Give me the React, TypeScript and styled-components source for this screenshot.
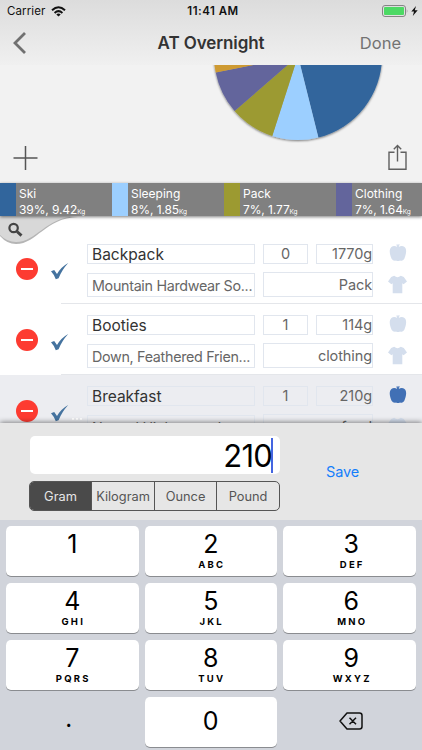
import * as React from "react";
import styled, { createGlobalStyle, css } from "styled-components";

const GlobalStyle = createGlobalStyle`
    * {
        box-sizing: border-box;
    }

    body {
        margin: 0;
        font-family: Inter, "Liberation Sans", sans-serif;
        color: #333333;
    }
`;

const Screen = styled.div`
    display: flex;
    flex-direction: column;
    width: 422px;
    height: 750px;
    overflow: hidden;
    background: #f2f2f2;
`;

const Header = styled.header`
    flex: none;
    height: 65px;
    background: linear-gradient(#dcdcdc, #f0f0f0);
`;

const StatusBar = styled.div`
    display: grid;
    grid-template-columns: 1fr auto 1fr;
    align-items: center;
    height: 21px;
    padding: 1px 4px 0 7px;
    font-size: 11.5px;
    color: #111111;
`;

const Carrier = styled.div`
    display: flex;
    align-items: center;
    gap: 6px;
    letter-spacing: 0.1px;
`;

const Clock = styled.div`
    padding-left: 1px;
    font-weight: 600;
    letter-spacing: 0.5px;
`;

const Power = styled.div`
    display: flex;
    justify-content: flex-end;
    align-items: center;
    gap: 3px;
`;

const NavBar = styled.div`
    display: grid;
    grid-template-columns: 1fr auto 1fr;
    align-items: center;
    height: 44px;
    padding: 0 21px 0 12px;
`;

const Title = styled.h1`
    margin: 0;
    padding-left: 9px;
    font-size: 17px;
    font-weight: 600;
    letter-spacing: -0.1px;
`;

const DoneButton = styled.button`
    justify-self: end;
    padding: 0;
    border: 0;
    background: none;
    font: 400 16.5px Inter, sans-serif;
    color: #737373;
`;

const Overview = styled.section`
    display: flex;
    flex: none;
    height: 118px;
    padding: 0 15px 0 13px;
`;

const ToolIcon = styled.svg`
    align-self: flex-end;
    flex: none;
    margin-bottom: 12px;
`;

const Pie = styled.svg`
    display: block;
    flex: none;
    margin: 0 auto 0 152.7px;
`;

const Legend = styled.div`
    display: flex;
    flex: none;
    position: relative;
    height: 33px;
    overflow: visible;
    box-shadow: 0 1px 3px rgba(0, 0, 0, 0.5);
    z-index: 1;
`;

const LegendItem = styled.div<{ $color: string }>`
    flex: 0 0 112px;
    height: 33px;
    padding: 3px 0 0 3px;
    border-left: 16px solid ${({ $color }) => $color};
    background: #808080;
    color: #ffffff;
    font-size: 12px;
    line-height: 15.5px;
    white-space: nowrap;

    &:last-child {
        flex-basis: 86px;
    }

    small {
        font-size: 6.5px;
    }
`;

const LegendValue = styled.div`
    letter-spacing: -0.1px;
`;

const List = styled.section`
    position: relative;
    flex: none;
    height: 207px;
    padding-top: 17px;
    overflow: hidden;
    background: #ffffff;
`;

const SearchTab = styled.svg`
    position: absolute;
    top: 0;
    left: 0;
`;

const Item = styled.div<{ $selected?: boolean }>`
    display: flex;
    height: 71px;
    background: ${({ $selected }) => ($selected ? "#ecedf1" : "#ffffff")};
`;

const RemoveButton = styled.button`
    display: flex;
    align-items: center;
    justify-content: center;
    flex: none;
    width: 22px;
    height: 22px;
    margin: 25px 0 0 16px;
    padding: 0;
    border: 0;
    border-radius: 50%;
    background: #fd3b31;

    &::before {
        content: "";
        width: 12px;
        height: 1.5px;
        background: #ffffff;
    }
`;

const ItemBody = styled.div<{ $last?: boolean }>`
    display: flex;
    flex: 1;
    margin-left: 23px;
    border-bottom: 1px solid ${({ $last }) => ($last ? "transparent" : "#e4e6ea")};
`;

const CheckColumn = styled.div`
    display: flex;
    flex: none;
    width: 37px;
    margin-left: -11px;
    padding-top: 29px;
`;

const MoreDots = styled.div`
    display: flex;
    gap: 2px;
    margin: 14px 0 0 3px;

    i {
        width: 2px;
        height: 2px;
        background: #ffffff;
    }
`;

const Fields = styled.div`
    display: grid;
    grid-template-columns: 168px 45px 57px;
    grid-template-rows: 20px 25px;
    gap: 8px;
    padding-top: 11px;
`;

const Field = styled.div<{ $align?: string; $strong?: boolean; $wide?: boolean }>`
    padding: 0 ${({ $align }) => ($align === "right" ? 0 : 4)}px;
    border: 1px solid #e1e6ee;
    font-size: 14.5px;
    line-height: 18px;
    letter-spacing: -0.1px;
    text-align: ${({ $align }) => $align || "left"};
    white-space: nowrap;
    color: #666666;

    ${({ $strong }) => $strong && css`
        font-size: 15.5px;
        line-height: 19px;
        letter-spacing: 0;
        color: #333333;
    `}

    ${({ $wide }) => $wide && css`
        grid-column: span 2;
    `}
`;

const Description = styled(Field)`
    margin-top: 0.5px;
    font-size: 14.3px;
    line-height: 23px;
    letter-spacing: -0.3px;
`;

const Category = styled(Field)`
    margin-top: -0.5px;
    line-height: 23px;
`;

const Badges = styled.div`
    display: flex;
    flex-direction: column;
    align-items: center;
    gap: 13px;
    margin: 10px 0 0 15px;
`;

const Editor = styled.section`
    position: relative;
    display: flex;
    flex: none;
    height: 97px;
    padding: 13px 0 0 29px;
    background: #e6e6e6;
    box-shadow: 0 -1px 5px rgba(0, 0, 0, 0.45);
`;

const EditorMain = styled.div`
    width: 251px;
`;

const ValueInput = styled.div`
    display: flex;
    align-items: center;
    justify-content: flex-end;
    height: 38px;
    padding-right: 7px;
    margin: 0 0 7px 1px;
    border-radius: 5px;
    background: #ffffff;
    font-size: 31px;
    letter-spacing: -0.8px;
    color: #000000;
`;

const Caret = styled.span`
    width: 2px;
    height: 35px;
    margin-left: -1px;
    background: #4465e0;
`;

const Units = styled.div`
    display: grid;
    grid-template-columns: 61px 63px 62px 63px;
    height: 30px;
    overflow: hidden;
    border: 1px solid #555555;
    border-radius: 5px;
`;

const Unit = styled.button<{ $active?: boolean }>`
    padding: 0;
    border: 0;
    border-left: 1px solid #555555;
    background: ${({ $active }) => ($active ? "#4a4a4a" : "transparent")};
    color: ${({ $active }) => ($active ? "#e6e6e6" : "#555555")};
    font: 400 12.8px Inter, sans-serif;

    &:first-child {
        border-left: 0;
    }
`;

const SaveButton = styled.button`
    align-self: flex-start;
    margin: 27px 0 0 46px;
    padding: 0;
    border: 0;
    background: none;
    font: 400 14.5px Inter, sans-serif;
    letter-spacing: -0.1px;
    color: #157efb;
`;

const Keypad = styled.div`
    display: grid;
    flex: 1;
    position: relative;
    grid-template-columns: repeat(3, 132.5px);
    grid-auto-rows: 50px;
    gap: 7px 6px;
    padding: 6px 6px 0 6px;
    background: #d1d4db;
`;

const Key = styled.button<{ $plain?: boolean; $centered?: boolean }>`
    display: flex;
    flex-direction: column;
    align-items: center;
    padding: 4px 0 0;
    border: 0;
    border-radius: 5px;
    background: #ffffff;
    box-shadow: 0 1px 0 #8a8c90;
    font: 400 25px/28px Inter, sans-serif;
    color: #000000;

    ${({ $centered }) => $centered && css`
        justify-content: center;
        padding: 0 0 2px;
    `}

    ${({ $plain }) => $plain && css`
        background: none;
        box-shadow: none;
    `}

    &:nth-child(3n) {
        padding-left: 4px;
    }
`;

const Point = styled.span`
    padding: 0 7px 5px 0;
    font-size: 24px;
`;

const Letters = styled.span`
    margin-top: 1px;
    padding-left: 2px;
    font-size: 9.5px;
    font-weight: 700;
    line-height: 11px;
    letter-spacing: 2.2px;
`;

const SLICES = [
    { color: "#31659c", path: "M84 -9 L104.4 72.5 A84 84 0 0 0 168 -9 Z" },
    { color: "#9ccfff", path: "M84 -9 L58.3 71 A84 84 0 0 0 104.4 72.5 Z" },
    { color: "#9c9a31", path: "M84 -9 L20.6 46.1 A84 84 0 0 0 58.3 71 Z" },
    { color: "#63659c", path: "M84 -9 L1.7 7.6 A84 84 0 0 0 20.6 46.1 Z" },
    { color: "#ce9a31", path: "M84 -9 L0 -9 A84 84 0 0 0 1.7 7.6 Z" },
];

const LEGEND = [
    { name: "Ski", value: "39%, 9.42", color: "#31659c" },
    { name: "Sleeping", value: "8%, 1.85", color: "#9ccfff" },
    { name: "Pack", value: "7%, 1.77", color: "#9c9a31" },
    { name: "Clothing", value: "7%, 1.64", color: "#63659c" },
];

const ITEMS = [
    { name: "Backpack", description: "Mountain Hardwear So...", quantity: 0, weight: "1770g", category: "Pack" },
    { name: "Booties", description: "Down, Feathered Frien...", quantity: 1, weight: "114g", category: "clothing" },
    { name: "Breakfast", description: "Natural High, granola", quantity: 1, weight: "210g", category: "food", selected: true },
];

const UNITS = ["Gram", "Kilogram", "Ounce", "Pound"];

const KEYS = [
    ["1", ""], ["2", "ABC"], ["3", "DEF"],
    ["4", "GHI"], ["5", "JKL"], ["6", "MNO"],
    ["7", "PQRS"], ["8", "TUV"], ["9", "WXYZ"],
];

const WifiIcon = () => (
    <svg width="15" height="11" viewBox="0 0 15 11" fill="none" stroke="#111111" strokeWidth="2">
        <path d="M1 4.2 Q7.5 -1.8 14 4.2" />
        <path d="M3.6 6.9 Q7.5 3.3 11.4 6.9" />
        <path d="M7.5 10.6 L5.3 8.4 Q7.5 6.7 9.7 8.4 Z" fill="#111111" stroke="none" />
    </svg>
);

const BatteryIcon = () => (
    <svg width="26" height="12" viewBox="0 0 26 12">
        <rect x="0.5" y="0.5" width="23" height="11" rx="2.5" fill="none" stroke="#858585" />
        <rect x="2" y="2" width="20" height="8" rx="1" fill="#4cd964" />
        <path d="M24.8 4 Q26 6 24.8 8 Z" fill="#858585" />
    </svg>
);

const BoltIcon = () => (
    <svg width="7" height="10" viewBox="0 0 7 10">
        <path d="M5 0 L0.3 5.6 H3 L1.8 10 L6.7 4.2 H3.8 Z" fill="#111111" />
    </svg>
);

const AppleIcon = ({ active }: { active?: boolean }) => (
    <svg width="18" height="19" viewBox="0 0 18 19" fill={active ? "#4170b5" : "#d4deed"}>
        <path d="M8 4 L7.4 1.6 L8.6 1.3 L9 2.8 L9.6 1 L10.6 1.3 L9.8 4 C11.5 2.5 14 2.6 15.5 4 C18.2 6.3 17.2 11 15.2 16 C14 17.5 12.5 18.2 11 17.5 Q9 18.5 7 17.5 C5 18.2 3.6 17 2.7 16 C0.5 11 -0.2 6.5 2.4 4 C4 2.5 6.6 2.6 8 4 Z" />
    </svg>
);

const ShirtIcon = () => (
    <svg width="19" height="19" viewBox="0 0 19 19" fill="#d4deed">
        <path d="M6.2 0.8 Q9.5 3.7 12.8 0.8 L15.8 2 L19 6.6 L15.6 9.2 L14.3 8.2 V18.3 H4.7 V8.2 L3.4 9.2 L0 6.6 L3.2 2 Z" />
    </svg>
);

export default function App() {
    return (
        <>
            <GlobalStyle />
            <Screen>
                <Header>
                    <StatusBar>
                        <Carrier>Carrier <WifiIcon /></Carrier>
                        <Clock>11:41 AM</Clock>
                        <Power><BatteryIcon /><BoltIcon /></Power>
                    </StatusBar>
                    <NavBar>
                        <svg width="15" height="22" viewBox="0 0 15 22" fill="none" stroke="#707070" strokeWidth="2.8">
                            <path d="M13 1 L3 11 L13 21" />
                        </svg>
                        <Title>AT Overnight</Title>
                        <DoneButton>Done</DoneButton>
                    </NavBar>
                </Header>
                <Overview>
                    <ToolIcon width="25" height="26" viewBox="0 0 25 26" stroke="#555555" strokeWidth="1.5">
                        <path d="M12.5 1 V25 M0.5 13 H24.5" />
                    </ToolIcon>
                    <Pie width="195" height="90" viewBox="-23 0 195 90">
                        <defs>
                            <filter id="pieShadow" x="-10%" y="-10%" width="120%" height="130%">
                                <feDropShadow dx="0" dy="1" stdDeviation="1.3" floodOpacity="0.5" />
                            </filter>
                        </defs>
                        <g filter="url(#pieShadow)">
                            {SLICES.map(slice => <path key={slice.color} d={slice.path} fill={slice.color} />)}
                        </g>
                    </Pie>
                    <ToolIcon width="19" height="27" viewBox="0 0 19 27" fill="none" stroke="#606060" strokeWidth="1.4">
                        <path d="M6.5 8.2 H1 V25.2 H18 V8.2 H12.5 M9.5 17.5 V1.8 M5.8 5.3 L9.5 1.6 L13.2 5.3" />
                    </ToolIcon>
                </Overview>
                <Legend>
                    {LEGEND.map(entry => (
                        <LegendItem key={entry.name} $color={entry.color}>
                            <div>{entry.name}</div>
                            <LegendValue>{entry.value}<small>Kg</small></LegendValue>
                        </LegendItem>
                    ))}
                </Legend>
                <List>
                    {ITEMS.map(item => (
                        <Item key={item.name} $selected={item.selected}>
                            <RemoveButton />
                            <ItemBody $last={item.selected}>
                                <CheckColumn>
                                    <svg width="19" height="18" viewBox="0 0 19 18">
                                        <path d="M1 9.3 L4.2 8 L7 12 Q11 5 18.2 1 Q11.8 8 8.6 16.3 L5.8 17.2 Q4 12.5 1 9.3 Z" fill="#45739f" />
                                    </svg>
                                    <MoreDots><i /><i /><i /></MoreDots>
                                </CheckColumn>
                                <Fields>
                                    <Field $strong>{item.name}</Field>
                                    <Field $align="center">{item.quantity}</Field>
                                    <Field $align="right">{item.weight}</Field>
                                    <Description>{item.description}</Description>
                                    <Category $align="right" $wide>{item.category}</Category>
                                </Fields>
                                <Badges>
                                    <AppleIcon active={item.selected} />
                                    <ShirtIcon />
                                </Badges>
                            </ItemBody>
                        </Item>
                    ))}
                    <SearchTab width="80" height="30" viewBox="0 0 80 30">
                        <path d="M0 1 H78 C45 2 37 28 16 28 Q7 28 0 20 Z" fill="#b5b5b5" />
                        <path d="M0 0 H78 C45 1 37 26 16 26 Q7 26 0 19 Z" fill="#d8d8d8" />
                        <g fill="none" stroke="#444444">
                            <circle cx="13.6" cy="12" r="4.2" strokeWidth="2.2" />
                            <path d="M17 15.5 L21.5 19.6" strokeWidth="3" />
                        </g>
                    </SearchTab>
                </List>
                <Editor>
                    <EditorMain>
                        <ValueInput>210<Caret /></ValueInput>
                        <Units>
                            {UNITS.map((unit, index) => <Unit key={unit} $active={index === 0}>{unit}</Unit>)}
                        </Units>
                    </EditorMain>
                    <SaveButton>Save</SaveButton>
                </Editor>
                <Keypad>
                    {KEYS.map(([digit, letters]) => (
                        <Key key={digit}>
                            {digit}
                            <Letters>{letters}</Letters>
                        </Key>
                    ))}
                    <Key $plain $centered><Point>.</Point></Key>
                    <Key $centered>0</Key>
                    <Key $plain $centered>
                        <svg width="24" height="18" viewBox="0 0 24 18" fill="none" stroke="#111111" strokeWidth="1.5" strokeLinejoin="round">
                            <path d="M8 1 H20.5 Q23 1 23 3.5 V14.5 Q23 17 20.5 17 H8 L1 9 Z M10.5 5.8 L17 12.2 M17 5.8 L10.5 12.2" />
                        </svg>
                    </Key>
                </Keypad>
            </Screen>
        </>
    );
}
